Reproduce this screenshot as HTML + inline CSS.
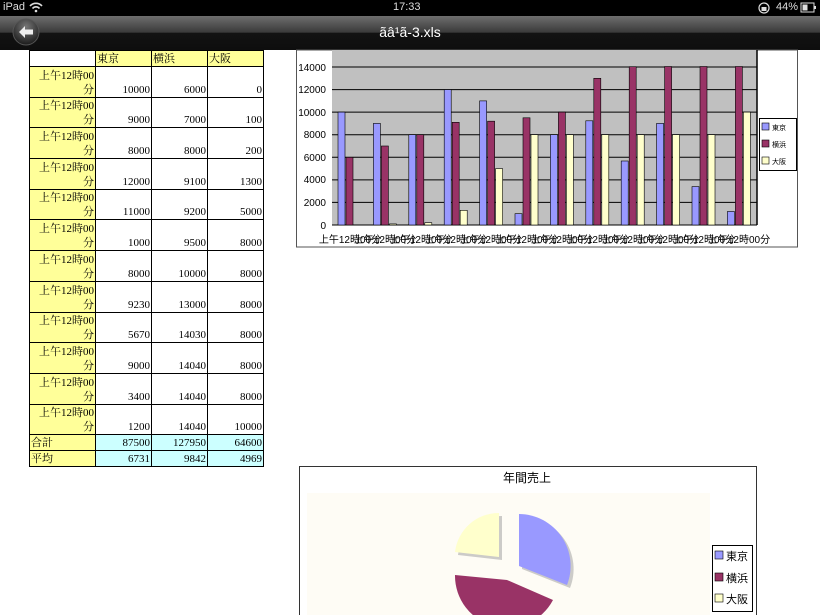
<!DOCTYPE html>
<html><head><meta charset="utf-8"><style>
body{margin:0;width:820px;height:615px;overflow:hidden;background:#fff;position:relative;font-family:"Liberation Sans","Noto Sans CJK JP",sans-serif}
#sb{position:absolute;left:0;top:0;width:820px;height:16px;background:#000;color:#ddd;font-size:11px}
#nav{position:absolute;left:0;top:16px;width:820px;height:34px;background:linear-gradient(#6e6e6e,#3a3a3a 48%,#121212 50%,#0e0e0e)}
#title{position:absolute;left:0;width:820px;top:8px;text-align:center;color:#fff;font-size:14px}
table{position:absolute;left:29px;top:50px;border-collapse:collapse;font-family:"Liberation Serif","Noto Serif CJK SC",serif;font-size:11px}
td{border:1px solid #000;padding:0 1px;text-align:right;vertical-align:bottom;line-height:14px}
td.l{background:#ffff99;width:63px;font-size:11px}
td.n{width:53px}
tr.r td{height:29.7px}
tr.h td{height:15px;background:#ffff99;text-align:left}
tr.h td.e{background:#fff}
tr.t td.n{background:#ccffff}
tr.t td{height:15px}
td.l.left{text-align:left}
svg{position:absolute;left:0;top:0}
</style></head><body>
<div id="sb"><span style="position:absolute;left:3px;top:1px">iPad</span>
<svg width="820" height="16" style="position:absolute;left:0;top:0"><path d="M30 6 A8 8 0 0 1 42 6 M32.5 8.5 A4.5 4.5 0 0 1 39.5 8.5" stroke="#ddd" stroke-width="1.6" fill="none"/><circle cx="36" cy="11" r="1.3" fill="#ddd"/>
<circle cx="764" cy="8" r="5" stroke="#ddd" fill="none" stroke-width="1.2"/><rect x="761.5" y="7" width="5" height="4" fill="#ddd"/>
<rect x="801" y="3" width="13" height="9" stroke="#ddd" fill="none"/><rect x="802.5" y="4.5" width="5" height="6" fill="#ddd"/><rect x="814" y="6" width="2" height="3" fill="#ddd"/></svg>
<span style="position:absolute;left:393px;top:1px">17:33</span>
<span style="position:absolute;left:776px;top:1px">44%</span></div>
<div id="nav"><div id="title">ãâ¹ã-3.xls</div>
<svg width="60" height="34"><defs><radialGradient id="bg" cx="0.5" cy="0.3" r="0.7"><stop offset="0" stop-color="#777"/><stop offset="1" stop-color="#1a1a1a"/></radialGradient></defs><circle cx="26" cy="16" r="13" fill="url(#bg)" stroke="#555"/><path d="M19 16 L25 10 L25 13.5 L33 13.5 L33 18.5 L25 18.5 L25 22 Z" fill="#eee"/></svg></div>

<table>
<tr class="h"><td class="l e"></td><td class="n">東京</td><td class="n">横浜</td><td class="n">大阪</td></tr>
<tr class="r"><td class="l">上午12時00<br>分</td><td class="n">10000</td><td class="n">6000</td><td class="n">0</td></tr>
<tr class="r"><td class="l">上午12時00<br>分</td><td class="n">9000</td><td class="n">7000</td><td class="n">100</td></tr>
<tr class="r"><td class="l">上午12時00<br>分</td><td class="n">8000</td><td class="n">8000</td><td class="n">200</td></tr>
<tr class="r"><td class="l">上午12時00<br>分</td><td class="n">12000</td><td class="n">9100</td><td class="n">1300</td></tr>
<tr class="r"><td class="l">上午12時00<br>分</td><td class="n">11000</td><td class="n">9200</td><td class="n">5000</td></tr>
<tr class="r"><td class="l">上午12時00<br>分</td><td class="n">1000</td><td class="n">9500</td><td class="n">8000</td></tr>
<tr class="r"><td class="l">上午12時00<br>分</td><td class="n">8000</td><td class="n">10000</td><td class="n">8000</td></tr>
<tr class="r"><td class="l">上午12時00<br>分</td><td class="n">9230</td><td class="n">13000</td><td class="n">8000</td></tr>
<tr class="r"><td class="l">上午12時00<br>分</td><td class="n">5670</td><td class="n">14030</td><td class="n">8000</td></tr>
<tr class="r"><td class="l">上午12時00<br>分</td><td class="n">9000</td><td class="n">14040</td><td class="n">8000</td></tr>
<tr class="r"><td class="l">上午12時00<br>分</td><td class="n">3400</td><td class="n">14040</td><td class="n">8000</td></tr>
<tr class="r"><td class="l">上午12時00<br>分</td><td class="n">1200</td><td class="n">14040</td><td class="n">10000</td></tr>
<tr class="t"><td class="l left">合計</td><td class="n">87500</td><td class="n">127950</td><td class="n">64600</td></tr>
<tr class="t"><td class="l left">平均</td><td class="n">6731</td><td class="n">9842</td><td class="n">4969</td></tr>
</table>

<svg width="820" height="615" style="top:0;left:0;pointer-events:none">
<rect x="296.5" y="50" width="501" height="197" fill="#fff" stroke="#555"/>
<rect x="332" y="50" width="425" height="175" fill="#c0c0c0"/>
<line x1="757" y1="50" x2="757" y2="225" stroke="#000" stroke-width="1.5"/>
<g stroke="#000" stroke-width="1"><line x1="332" x2="757" y1="67" y2="67"/><line x1="332" x2="757" y1="89.6" y2="89.6"/><line x1="332" x2="757" y1="112.1" y2="112.1"/><line x1="332" x2="757" y1="134.7" y2="134.7"/><line x1="332" x2="757" y1="157.3" y2="157.3"/><line x1="332" x2="757" y1="179.9" y2="179.9"/><line x1="332" x2="757" y1="202.4" y2="202.4"/><line x1="332" x2="757" y1="225" y2="225"/></g>
<g font-size="10" text-anchor="end" fill="#000"><text x="326" y="71">14000</text><text x="326" y="93">12000</text><text x="326" y="116">10000</text><text x="326" y="138">8000</text><text x="326" y="161">6000</text><text x="326" y="183">4000</text><text x="326" y="206">2000</text><text x="326" y="229">0</text></g>
<g stroke="#000" stroke-width="0.6">
<g fill="#9999ff">
<rect x="338" y="112.1" width="7" height="112.9"/><rect x="373.4" y="123.4" width="7" height="101.6"/><rect x="408.8" y="134.7" width="7" height="90.3"/><rect x="444.2" y="89.6" width="7" height="135.4"/><rect x="479.6" y="100.9" width="7" height="124.1"/><rect x="515" y="213.7" width="7" height="11.3"/><rect x="550.4" y="134.7" width="7" height="90.3"/><rect x="585.8" y="120.8" width="7" height="104.2"/><rect x="621.2" y="161" width="7" height="64"/><rect x="656.6" y="123.4" width="7" height="101.6"/><rect x="692" y="186.6" width="7" height="38.4"/><rect x="727.4" y="211.5" width="7" height="13.5"/></g>
<g fill="#993366">
<rect x="346" y="157.3" width="7" height="67.7"/><rect x="381.4" y="146" width="7" height="79"/><rect x="416.8" y="134.7" width="7" height="90.3"/><rect x="452.2" y="122.3" width="7" height="102.7"/><rect x="487.6" y="121.2" width="7" height="103.8"/><rect x="523" y="117.8" width="7" height="107.2"/><rect x="558.4" y="112.1" width="7" height="112.9"/><rect x="593.8" y="78.3" width="7" height="146.7"/><rect x="629.2" y="66.7" width="7" height="158.3"/><rect x="664.6" y="66.5" width="7" height="158.5"/><rect x="700" y="66.5" width="7" height="158.5"/><rect x="735.4" y="66.5" width="7" height="158.5"/></g>
<g fill="#ffffcc">
<rect x="389.4" y="223.9" width="7" height="1.1"/><rect x="424.8" y="222.7" width="7" height="2.3"/><rect x="460.2" y="210.3" width="7" height="14.7"/><rect x="495.6" y="168.6" width="7" height="56.4"/><rect x="531" y="134.7" width="7" height="90.3"/><rect x="566.4" y="134.7" width="7" height="90.3"/><rect x="601.8" y="134.7" width="7" height="90.3"/><rect x="637.2" y="134.7" width="7" height="90.3"/><rect x="672.6" y="134.7" width="7" height="90.3"/><rect x="708" y="134.7" width="7" height="90.3"/><rect x="743.4" y="112.1" width="7" height="112.9"/></g>
</g>
<g font-size="10" fill="#000" text-anchor="middle"><text x="350" y="243">上午12時00分</text><text x="385" y="243">上午12時00分</text><text x="421" y="243">上午12時00分</text><text x="456" y="243">上午12時00分</text><text x="491" y="243">上午12時00分</text><text x="527" y="243">上午12時00分</text><text x="562" y="243">上午12時00分</text><text x="598" y="243">上午12時00分</text><text x="633" y="243">上午12時00分</text><text x="668" y="243">上午12時00分</text><text x="704" y="243">上午12時00分</text><text x="739" y="243">上午12時00分</text></g>
<rect x="759.5" y="118.5" width="37" height="52" fill="#fff" stroke="#000"/>
<g stroke="#000" stroke-width="0.6"><rect x="762" y="123" width="7" height="7" fill="#9999ff"/><rect x="762" y="140" width="7" height="7" fill="#993366"/><rect x="762" y="157" width="7" height="7" fill="#ffffcc"/></g>
<g font-size="7" fill="#000"><text x="772" y="130">東京</text><text x="772" y="147">横浜</text><text x="772" y="164">大阪</text></g>

<rect x="299.5" y="466.5" width="457" height="160" fill="#fff" stroke="#333"/>
<text x="527" y="482" font-size="12" text-anchor="middle" fill="#000">年間売上</text>
<rect x="307" y="493" width="403" height="130" fill="#fefcf5"/>
<g fill="#aaa" opacity="0.6" transform="translate(3,3)">
<path d="M519 566 L519 514 A52 52 0 0 1 567 585 Z"/><path d="M499 557 L455 552 A44 44 0 0 1 499 513 Z"/>
</g>
<path d="M519 566 L519 514 A52 52 0 0 1 567 585 Z" fill="#9999ff"/>
<path d="M507 580 L553 600 A52 52 0 0 1 455 575 Z" fill="#993366"/>
<path d="M499 557 L455 552 A44 44 0 0 1 499 513 Z" fill="#ffffcc"/>
<rect x="712.5" y="545.5" width="40" height="66" fill="#fff" stroke="#000"/>
<g stroke="#000" stroke-width="0.6"><rect x="715" y="551" width="8" height="8" fill="#9999ff"/><rect x="715" y="573" width="8" height="8" fill="#993366"/><rect x="715" y="594" width="8" height="8" fill="#ffffcc"/></g>
<g font-size="11" fill="#000"><text x="726" y="560">東京</text><text x="726" y="582">横浜</text><text x="726" y="603">大阪</text></g>
</svg>
</body></html>
